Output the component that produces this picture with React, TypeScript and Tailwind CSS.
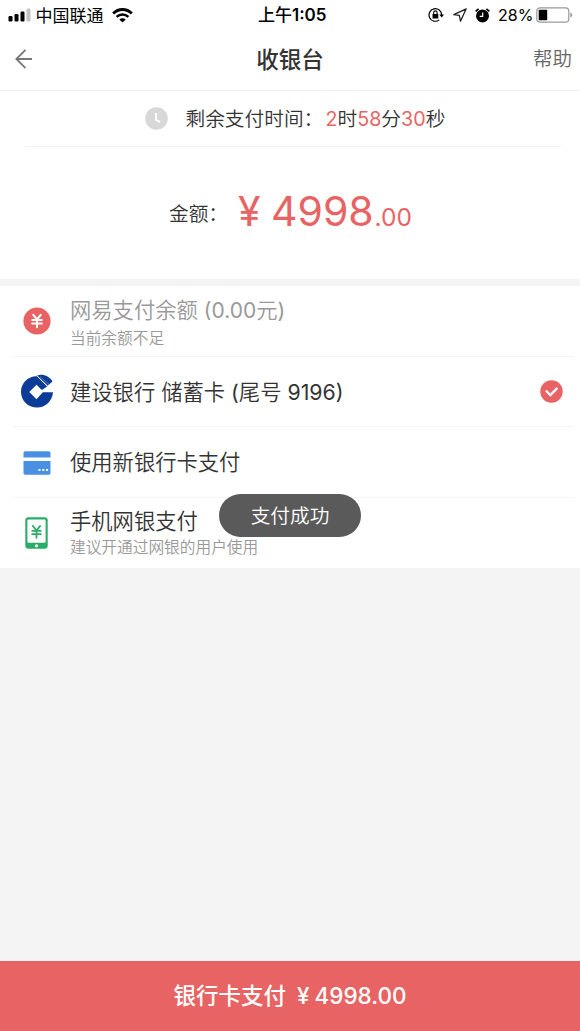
import type { ReactNode } from "react";

function StatusBar() {
    return (
        <div className="flex h-[30px] items-center pl-2 pr-[9px] text-[17px] text-black">
            <div className="flex w-[250px] items-center">
                <svg className="h-[14px] w-[23px] shrink-0" viewBox="0 0 23 14">
                    <rect x="0.5" y="8" width="4" height="5.5" rx="1.2" />
                    <rect x="6.5" y="6" width="4" height="7.5" rx="1.2" />
                    <rect x="12.5" y="3.5" width="4" height="10" rx="1.2" />
                    <rect x="18.5" y="0.5" width="4" height="13" rx="1.2" fill="#c4c4c4" />
                </svg>
                <span className="ml-[4.5px] pt-[3px]">中国联通</span>
                <svg className="ml-2 h-[15px] w-[21px] shrink-0" viewBox="0 0 21 15" fill="none" stroke="#000">
                    <path d="M1.2 5.4C6.5 0.2 14.5 0.2 19.8 5.4" strokeWidth="2.8" />
                    <path d="M4.6 8.9C8 5.7 13 5.7 16.4 8.9" strokeWidth="2.6" />
                    <path d="M7.3 11.4C9.2 9.7 11.8 9.7 13.7 11.4L10.5 14.4Z" fill="#000" stroke="none" />
                </svg>
            </div>
            <span className="pt-[2px] font-medium">上午<span className="font-semibold">1:05</span></span>
            <div className="ml-auto flex items-center">
                <svg className="h-4 w-4" viewBox="0 0 16 16" fill="none" stroke="#000" strokeWidth="1.2">
                    <path d="M11.2 12.9A6.3 6.3 0 1 1 13.6 8" />
                    <path d="M11.3 7.5H16L13.7 10.6Z" fill="#000" stroke="none" />
                    <rect x="4.5" y="6.9" width="5.8" height="4.6" rx="0.5" fill="#000" stroke="none" />
                    <path d="M5.7 7.2V5.6a1.7 1.7 0 0 1 3.4 0V7.2" strokeWidth="1.1" />
                </svg>
                <svg className="ml-[9px] h-[14px] w-[14px]" viewBox="0 0 14 14" fill="none" stroke="#222" strokeWidth="1.3" strokeLinejoin="round">
                    <path d="M13.2 0.8L0.8 6.6L6.3 7.4L7.5 13.2Z" />
                </svg>
                <svg className="ml-[8px] h-[15px] w-[15px]" viewBox="0 0 15 15" fill="none" stroke="#000">
                    <circle cx="7.5" cy="7.9" r="6.5" fill="#000" stroke="none" />
                    <path d="M0.6 3.4L3.6 0.8M14.4 3.4L11.4 0.8" strokeWidth="1.6" />
                    <path d="M7.7 4.4V8.3H4.7" stroke="#fff" strokeWidth="1.2" />
                </svg>
                <span className="ml-2 w-[34px] whitespace-nowrap text-[16px]">28%</span>
                <svg className="ml-[4px] -mr-[2px] h-4 w-[37px]" viewBox="0 0 37 16">
                    <rect x="0.8" y="0.8" width="32" height="14.4" rx="3.2" fill="none" stroke="#999" strokeWidth="1.2" />
                    <rect x="2.7" y="2.8" width="8.5" height="10.4" rx="0.8" />
                    <path d="M34.3 5.5a2.6 2.6 0 0 1 0 5z" fill="#999" />
                </svg>
            </div>
        </div>
    );
}

function CoinIcon() {
    return (
        <svg className="size-[28px]" viewBox="0 0 28 28" fill="none" stroke="#fff" strokeWidth="2" strokeLinecap="round">
            <circle cx="14" cy="14" r="13.6" fill="#e86464" stroke="none" />
            <path d="M10.3 7.9L14 12.5L17.7 7.9M9.2 13H18.8M9.2 16.5H18.8M14 12.7V20.3" />
        </svg>
    );
}

function BankIcon() {
    return (
        <svg className="size-[34px]" viewBox="0 0 34 34">
            <path
                fill="#0c3c98"
                fillRule="evenodd"
                d="M15.5 2.2C6.5 3 1 10 1 17.8C1 27 8 33.5 17 33.5C25.5 33.5 32.3 27 33 18.2H22.8L16.5 25.3L9.3 18L16.5 10.8L21.8 16L27.2 12.6L17.2 2.2Z"
            />
            <path fill="#0c3c98" d="M17 1.5C23 -0.4 29 2 32.5 7.4L27.6 11.8Z" />
            <path d="M17 1.9L27.4 12.2" stroke="#fff" strokeWidth="0.8" />
            <path d="M20 2.6L29.3 10.6" stroke="#fff" strokeWidth="0.3" />
        </svg>
    );
}

function CardIcon() {
    return (
        <svg className="h-[24px] w-[28px] translate-y-px" viewBox="0 0 28 24" fill="#4990e2">
            <path d="M0.5 6.5V2A1.7 1.7 0 0 1 2.2 0.3H25.8A1.7 1.7 0 0 1 27.5 2V6.5Z" />
            <path d="M0.5 10H27.5V22A1.7 1.7 0 0 1 25.8 23.7H2.2A1.7 1.7 0 0 1 0.5 22Z" />
            <path d="M15.5 18h2v2h-2zM19.3 18h2v2h-2zM23.1 18h2v2h-2z" fill="#fff" />
        </svg>
    );
}

function PhoneIcon() {
    return (
        <svg className="h-[32px] w-[23px]" viewBox="0 0 23 32" fill="none" stroke="#2aad67">
            <rect x="0.3" y="0.3" width="22.4" height="31.4" rx="3" fill="#2aad67" stroke="none" />
            <rect x="2.4" y="2.5" width="18.2" height="23.3" rx="1.3" fill="#fff" stroke="none" />
            <circle cx="11.5" cy="28.8" r="1.6" fill="#fff" stroke="none" />
            <path d="M7.8 8.9L11.5 13.5L15.2 8.9M7.2 13.8H15.8M7.2 17.2H15.8M11.5 13.7V20.8" strokeWidth="1.8" strokeLinecap="round" />
        </svg>
    );
}

interface PayRowProps {
    icon: ReactNode;
    title: ReactNode;
    hint?: string;
    disabled?: boolean;
    selected?: boolean;
    last?: boolean;
}

function PayRow({ icon, title, hint, disabled, selected, last }: PayRowProps) {
    return (
        <div className="pl-[13px] pr-[6px]">
            <div className={`flex items-center pr-[11px] ${last ? "h-[70px]" : "h-[70.5px] border-b border-[#f4f4f4]"}`}>
                <div className="flex w-[47px] shrink-0 justify-center">{icon}</div>
                <div className={`ml-[10px] flex-1 whitespace-nowrap ${disabled ? "pt-[5px]" : last ? "" : "pt-px"}`}>
                    <div className={`text-[21.3px] font-[350] leading-[30px] ${disabled ? "text-[#999]" : "text-[#333]"}`}>{title}</div>
                    {hint && <div className={`text-[15.7px] font-[350] text-[#999] ${disabled ? "leading-[26px]" : "leading-[23px]"}`}>{hint}</div>}
                </div>
                {selected && (
                    <svg className="size-[23px]" viewBox="0 0 23 23" fill="none">
                        <circle cx="11.5" cy="11.5" r="11.2" fill="#e86464" />
                        <path d="M6.5 11.3L10.3 15.1L16.8 8.6" stroke="#fff" strokeWidth="2.3" strokeLinecap="round" />
                    </svg>
                )}
            </div>
        </div>
    );
}

export default function App() {
    return (
        <div className="relative flex h-[1031px] w-[580px] flex-col overflow-hidden bg-[#f4f4f4] font-['Inter','Noto_Sans_CJK_SC',sans-serif] font-normal text-[#333]">
            <div className="bg-white">
                <StatusBar />
                <header className="flex h-[61px] items-center border-b border-[#f0f0f0] px-2 pb-[3px]">
                    <div className="w-[60px] pl-[7px]">
                        <svg className="h-[20px] w-[18px]" viewBox="0 0 18 20" fill="none" stroke="#777" strokeWidth="1.8">
                            <path d="M17 10H1.5M10.5 0.8L1.3 10L10.5 19.2" />
                        </svg>
                    </div>
                    <h1 className="flex-1 pt-[2px] text-center text-[22.5px] font-medium">收银台</h1>
                    <span className="w-[60px] pt-[3px] text-right text-[19.5px] font-[350] text-[#666]">帮助</span>
                </header>

                <div className="ml-[25px] mr-[18px] flex h-[56px] items-center border-b border-[#f3f3f3] pl-[120px] text-[19.7px] font-[350]">
                    <svg className="size-[23px] shrink-0" viewBox="0 0 23 23" fill="none">
                        <circle cx="11.5" cy="11.5" r="11.3" fill="#d8d8d8" />
                        <path d="M11.1 6V13L15 15" stroke="#fff" strokeWidth="2" />
                    </svg>
                    <span className="ml-[17.5px] w-[140px] whitespace-nowrap pt-[2px]">剩余支付时间：</span>
                    <span className="whitespace-nowrap pt-[2px]">
                        <b className="font-normal text-[#e86464]">2</b>时<b className="font-normal text-[#e86464]">58</b>分
                        <b className="font-normal text-[#e86464]">30</b>秒
                    </span>
                </div>

                <div className="flex h-[132px] items-center whitespace-nowrap pl-[169px]">
                    <span className="w-[68px] pt-[3px] text-[19.7px] font-[350]">金额：</span>
                    <div className="flex items-baseline pb-[5px] text-[#e86464]">
                        <span className="w-[34px] pl-px text-[41px] leading-[50px]">¥</span>
                        <span className="w-[103.5px] text-[41px] leading-[50px]">4998</span>
                        <span className="text-[24.5px]">.00</span>
                    </div>
                </div>
            </div>

            <div className="mt-[7px] bg-white">
                <PayRow
                    icon={<CoinIcon />}
                    title={<>网易支付余额 <span className="text-[21px] font-normal">(0.00</span>元<span className="font-normal">)</span></>}
                    hint="当前余额不足"
                    disabled
                />
                <PayRow
                    icon={<BankIcon />}
                    title={<>建设银行 储蓄卡 <span className="font-normal">(</span>尾号 <span className="font-normal">9196)</span></>}
                    selected
                />
                <PayRow icon={<CardIcon />} title="使用新银行卡支付" />
                <PayRow icon={<PhoneIcon />} title="手机网银支付" hint="建议开通过网银的用户使用" last />
            </div>

            <button className="mt-auto flex h-[70px] items-center justify-center whitespace-nowrap bg-[#e86464] text-[22.5px] font-medium text-white">
                <span>银行卡支付</span>
                <span className="ml-[11px]">¥</span>
                <span className="ml-[5px]">4998.00</span>
            </button>

            <div className="absolute left-[219px] top-[494px] flex h-[43px] w-[142px] items-center justify-center rounded-full bg-[#5a5a5a] pt-[3px] text-[19.7px] font-[350] text-white">
                支付成功
            </div>
        </div>
    );
}
